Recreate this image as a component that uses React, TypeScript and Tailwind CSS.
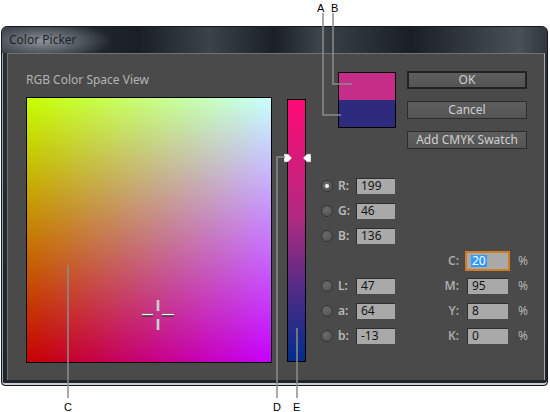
import React from 'react';

const font = { fontFamily: '"Noto Sans", "Open Sans", Arial, sans-serif' };

const left: ({ k: string; v: string; on?: boolean } | null)[] = [
  { k: 'R', v: '199', on: true },
  { k: 'G', v: '46' },
  { k: 'B', v: '136' },
  null,
  { k: 'L', v: '47' },
  { k: 'a', v: '64' },
  { k: 'b', v: '-13' },
];

const right: ({ k: string; v: string; focus?: boolean } | null)[] = [
  null,
  null,
  null,
  { k: 'C', v: '20', focus: true },
  { k: 'M', v: '95' },
  { k: 'Y', v: '8' },
  { k: 'K', v: '0' },
];

function Radio({ on }: { on?: boolean }) {
  return (
    <span className="flex h-[12px] w-[12px] items-center justify-center rounded-full border border-[#363636] bg-[radial-gradient(circle_at_40%_35%,#6a6a6a,#4f4f4f)]">
      {on && <span className="h-[4px] w-[4px] rounded-full bg-[#f2f2f2]" />}
    </span>
  );
}

function Btn({ children, main }: { children: React.ReactNode; main?: boolean }) {
  return (
    <div
      className={
        'flex h-[18px] w-[120px] items-center justify-center bg-[linear-gradient(#5e5e5e,#545454)] text-[12px] leading-none text-[#cfcfcf] ' +
        (main ? 'border-2 border-[#222]' : 'border border-[#2c2c2c]')
      }
    >
      {children}
    </div>
  );
}

function Field({ v, focus, w }: { v: string; focus?: boolean; w: string }) {
  return (
    <div
      className={
        'flex h-[16px] items-center bg-[#a9a9a9] pl-[4px] text-[12px] leading-none text-[#151515] ' +
        w +
        (focus
          ? ' outline-2 outline-[#d27c22]'
          : ' border-t border-l border-[#2e2e2e]')
      }
    >
      {focus ? <span className="bg-[#3399ff] px-[1px] text-white">{v}</span> : v}
    </div>
  );
}

export default function App() {
  return (
    <div className="relative h-[412px] w-[550px] overflow-hidden bg-white" style={font}>
      {/* dialog window */}
      <div className="ml-[1px] mt-[26px] flex h-[360px] w-[547px] flex-col overflow-hidden rounded-t-[6px] rounded-b-[4px] border border-[#15191e] bg-[linear-gradient(#2a3037,#20252b)] shadow-[inset_1px_0_0_#9ba1a6,inset_0_-2px_0_#c9ced3]">
        <div className="flex h-[26px] shrink-0 items-center bg-[radial-gradient(70px_20px_at_40px_14px,#8e949a,#5d636a_45%,transparent_100%),linear-gradient(90deg,#2f353c,#1a1f26_25%,#3b424a_38%,#1b2027_50%,#3c434b_58%,#1a1f26_75%,#4a5058_95%,#30363d)] pl-[7px]">
          <span className="text-[12px] text-[#1f2226]">Color Picker</span>
        </div>
        {/* content panel */}
        <div className="ml-[5px] flex h-[327px] w-[538px] border-t border-l border-r border-[#6e7378] border-r-[#a4a9ad] bg-[#4a4a4a] pl-[18px] pt-[18px]">
          <div className="flex w-[246px] flex-col">
            <div className="h-[16px] text-[12px] leading-[16px] text-[#b4b4b4]">RGB Color Space View</div>
            <div className="relative mt-[9px] h-[266px] w-[246px] border border-black bg-[linear-gradient(to_top,#000000,#00ff00),linear-gradient(to_right,#c70000,#c700ff)] bg-blend-lighten">
              <svg className="absolute left-[114px] top-[200px]" width="34" height="34" viewBox="0 0 34 34">
                <g stroke="#2a2a2a" strokeWidth="3">
                  <line x1="1" y1="17" x2="12" y2="17" />
                  <line x1="21" y1="17" x2="33" y2="17" />
                </g>
                <g stroke="#f4f4f4" strokeWidth="1.6">
                  <line x1="1" y1="16.5" x2="12" y2="16.5" />
                  <line x1="21" y1="16.5" x2="33" y2="16.5" />
                </g>
                <g stroke="#aaaaaa" strokeWidth="3">
                  <line x1="17" y1="2" x2="17" y2="13" />
                  <line x1="17" y1="21" x2="17" y2="32" />
                </g>
                <g stroke="#f0f0f0" strokeWidth="1">
                  <line x1="17" y1="2" x2="17" y2="13" />
                  <line x1="17" y1="21" x2="17" y2="32" />
                </g>
              </svg>
            </div>
          </div>

          <div className="relative ml-[15px] mt-[27px] h-[263px] w-[19px] border border-black bg-[linear-gradient(to_bottom,#ff0a74,#b02a80_45%,#4a2c86_75%,#002e8a)]">
            <svg className="absolute left-[-4px] top-[53px]" width="27" height="10" viewBox="0 0 27 10">
              <path d="M0 1 H4 L8 5 L4 9 H0 Z" fill="#fff" stroke="#777" strokeWidth="0.5" />
              <path d="M27 1 H23 L19 5 L23 9 H27 Z" fill="#fff" stroke="#777" strokeWidth="0.5" />
            </svg>
          </div>

          <div className="ml-[15px] flex w-[215px] flex-col">
            <div className="flex">
              <div className="ml-[17px] flex h-[56px] w-[58px] flex-col border border-black">
                <div className="flex-1 bg-[#c62d88]" />
                <div className="flex-1 bg-[#2e2b7e]" />
              </div>
              <div className="-mt-[1px] ml-[11px] flex flex-col gap-[12px]">
                <Btn main>OK</Btn>
                <Btn>Cancel</Btn>
                <Btn>Add CMYK Swatch</Btn>
              </div>
            </div>
            <div className="mt-[24px] flex flex-col">
              {left.map((l, i) => {
                const r = right[i];
                return (
                  <div key={i} className="flex h-[25px] items-center">
                    <div className="flex w-[74px] items-center">
                      {l && (
                        <>
                          <Radio on={l.on} />
                          <span className="ml-[5px] w-[18px] text-[12px] font-semibold text-[#b9b9b9]">{l.k}:</span>
                          <Field v={l.v} w="w-[39px]" />
                        </>
                      )}
                    </div>
                    {r && (
                      <div className="flex items-center">
                        <span className="w-[67px] pr-[3px] text-right text-[12px] font-semibold text-[#a9a9a9]">{r.k}:</span>
                        <div className="ml-[5px]">
                          <Field v={r.v} focus={r.focus} w="w-[41px]" />
                        </div>
                        <span className="ml-[10px] text-[12px] text-[#b4b4b4]">%</span>
                      </div>
                    )}
                  </div>
                );
              })}
            </div>
          </div>
        </div>
      </div>

      {/* callouts */}
      <svg className="pointer-events-none absolute inset-0" width="550" height="412">
        <g stroke="#8c8c8c" strokeWidth="1.5" fill="none">
          <path d="M323 13 V115 H341" />
          <path d="M333 13 V84 H352" />
          <path d="M68 265 V398" />
          <path d="M285 157 H277 V398" />
          <path d="M297 328 V398" />
        </g>
      </svg>
      <span className="absolute left-[317px] top-[0px] text-[11px] text-black" style={{ fontFamily: '"Liberation Sans", Arial, sans-serif' }}>A</span>
      <span className="absolute left-[331px] top-[0px] text-[11px] text-black" style={{ fontFamily: '"Liberation Sans", Arial, sans-serif' }}>B</span>
      <span className="absolute left-[64px] top-[399px] text-[11px] text-black" style={{ fontFamily: '"Liberation Sans", Arial, sans-serif' }}>C</span>
      <span className="absolute left-[273px] top-[399px] text-[11px] text-black" style={{ fontFamily: '"Liberation Sans", Arial, sans-serif' }}>D</span>
      <span className="absolute left-[293px] top-[399px] text-[11px] text-black" style={{ fontFamily: '"Liberation Sans", Arial, sans-serif' }}>E</span>
    </div>
  );
}
